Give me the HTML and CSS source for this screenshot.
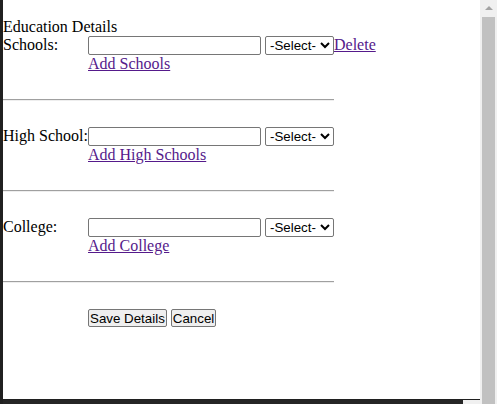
FILE: index.html
```html
<!DOCTYPE html>
<html>
<head>
<meta charset="utf-8">
<title>Education Details</title>
<link rel="stylesheet" href="styles.css">
</head>
<body>
<div class="screen">
  <div class="main">
    <div class="page">
      <div class="title">Education Details</div>

      <div class="group">
        <div class="row">
          <span class="label">Schools:</span>
          <div class="controls">
            <input class="field" type="text">
            <select class="picker"><option>-Select-</option></select><a class="link" href="#">Delete</a>
          </div>
        </div>
        <div class="row add">
          <span class="label"></span>
          <a class="link" href="#">Add Schools</a>
        </div>
      </div>
      <hr class="rule">

      <div class="group">
        <div class="row">
          <span class="label">High School:</span>
          <div class="controls">
            <input class="field" type="text">
            <select class="picker"><option>-Select-</option></select>
          </div>
        </div>
        <div class="row add">
          <span class="label"></span>
          <a class="link" href="#">Add High Schools</a>
        </div>
      </div>
      <hr class="rule">

      <div class="group">
        <div class="row">
          <span class="label">College:</span>
          <div class="controls">
            <input class="field" type="text">
            <select class="picker"><option>-Select-</option></select>
          </div>
        </div>
        <div class="row add">
          <span class="label"></span>
          <a class="link" href="#">Add College</a>
        </div>
      </div>
      <hr class="rule">

      <div class="row actions">
        <span class="label"></span>
        <div class="buttons">
          <button class="btn" type="button">Save Details</button>
          <button class="btn" type="button">Cancel</button>
        </div>
      </div>
    </div>
    <div class="bottom">
      <div class="bottom-dark"></div>
      <div class="bottom-light"></div>
    </div>
  </div>
  <div class="scrollbar">
    <div class="arrow-box"><div class="arrow"></div></div>
    <div class="thumb"></div>
  </div>
</div>
</body>
</html>
```

FILE: styles.css
```css
html, body {
  margin: 0;
  padding: 0;
  background: #ffffff;
}

body {
  font-family: "Liberation Serif", "Times New Roman", serif;
  font-size: 16px;
  color: #000;
}

.screen {
  display: flex;
  width: 497px;
  height: 404px;
  overflow: hidden;
}

.main {
  width: 480px;
  display: flex;
  flex-direction: column;
  border-left: 3px solid #202020;
  box-sizing: border-box;
  background: #202020;
}

.page {
  height: 399px;
  background: #ffffff;
  padding-top: 18px;
  box-sizing: border-box;
}

.title {
  line-height: 18px;
  height: 18px;
}

.row {
  display: flex;
  align-items: baseline;
  line-height: 18px;
}

.label {
  width: 85px;
  flex: none;
  white-space: nowrap;
}

.controls {
  display: flex;
  align-items: baseline;
}

.field {
  box-sizing: border-box;
  width: 173px;
  height: 19px;
  margin: 0 4px 0 0;
  padding: 1px 2px;
  border: 1px solid #767676;
  border-radius: 2px;
  font-family: "Liberation Sans", Arial, sans-serif;
  font-size: 13.33px;
  background: #fff;
}

.picker {
  box-sizing: border-box;
  width: 69px;
  height: 19px;
  margin: 0;
  font-family: "Liberation Sans", Arial, sans-serif;
  font-size: 13.33px;
  color: #000;
  border: 1px solid #767676;
  border-radius: 2px;
  background-color: #fff;
}

.link {
  color: #551a8b;
  text-decoration: underline;
}

.add {
  height: 18px;
}

.rule {
  width: 331px;
  height: 0;
  margin: 26px 0 26px 0;
  border: 0;
  border-top: 1px solid #a0a0a0;
  border-bottom: 1px solid #eeeeee;
}

.buttons {
  display: flex;
  gap: 4px;
}

.btn {
  box-sizing: border-box;
  height: 18px;
  margin: 0;
  padding: 0 1px;
  border: 1px solid #767676;
  border-radius: 2px;
  background: #efefef;
  font-family: "Liberation Sans", Arial, sans-serif;
  font-size: 13.33px;
  line-height: 15px;
  color: #000;
}

.bottom {
  height: 5px;
  display: flex;
  border-top: 1px solid #202020;
  box-sizing: border-box;
  background: #252525;
}

.bottom-dark {
  flex: 1;
}

.bottom-light {
  width: 17px;
  background: #f0f0f0;
}

.scrollbar {
  width: 17px;
  height: 404px;
  background: #f0f0f0;
  display: flex;
  flex-direction: column;
  align-items: center;
}

.arrow-box {
  height: 17px;
  width: 17px;
  display: flex;
  align-items: center;
  justify-content: center;
}

.arrow {
  width: 0;
  height: 0;
  border-left: 4px solid transparent;
  border-right: 4px solid transparent;
  border-bottom: 4px solid #a3a3a3;
  margin-top: -1px;
}

.thumb {
  width: 13px;
  flex: 1;
  background: #c1c1c1;
}
```
